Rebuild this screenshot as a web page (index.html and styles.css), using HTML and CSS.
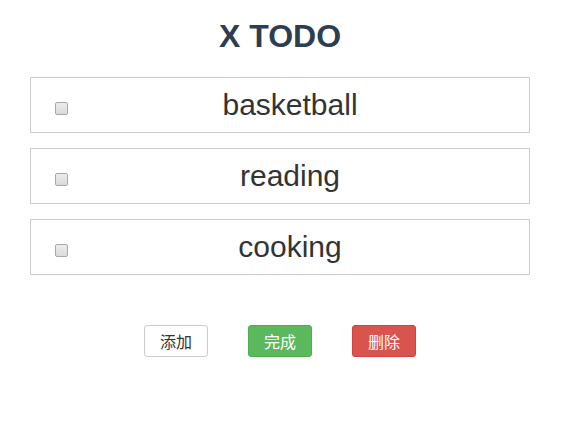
FILE: index.html
```html
<!DOCTYPE html>
<html>
<head>
<meta charset="utf-8">
<link rel="stylesheet" href="styles.css">
</head>
<body>
<div class="app">
  <h1 class="title">X TODO</h1>
  <ul class="list">
    <li class="item"><input type="checkbox" class="check"><span class="label">basketball</span></li>
    <li class="item"><input type="checkbox" class="check"><span class="label">reading</span></li>
    <li class="item"><input type="checkbox" class="check"><span class="label">cooking</span></li>
  </ul>
  <div class="actions">
    <button class="btn btn-default">添加</button>
    <button class="btn btn-success">完成</button>
    <button class="btn btn-danger">删除</button>
  </div>
</div>
</body>
</html>
```
FILE: styles.css
```css
html, body {
  margin: 0;
  padding: 0;
  background: #fff;
}
body {
  font-family: "Liberation Sans", Arial, "Noto Sans CJK SC", sans-serif;
  color: #333;
}
.app {
  width: 500px;
  margin-left: 30px;
}
.title {
  margin: 18px 0 22px;
  font-size: 32px;
  line-height: 37px;
  font-weight: bold;
  color: #2c3e50;
  text-align: center;
}
.list {
  list-style: none;
  margin: 0;
  padding: 0;
  display: flex;
  flex-direction: column;
  gap: 15px;
}
.item {
  box-sizing: border-box;
  height: 56px;
  border: 1px solid #ccc;
  display: flex;
  align-items: center;
  padding-left: 24px;
}
.check {
  appearance: none;
  -webkit-appearance: none;
  box-sizing: border-box;
  width: 13px;
  height: 13px;
  margin: 6px 0 0 0;
  border: 1px solid #a8a8a8;
  border-radius: 2px;
  background: linear-gradient(#ececec, #dadada);
}
.label {
  flex: 1;
  text-align: center;
  font-size: 30px;
  line-height: 34px;
  margin: 0 17px 0 0;
  color: #333;
}
.actions {
  display: flex;
  justify-content: center;
  gap: 40px;
  margin-top: 50px;
}
.btn {
  box-sizing: border-box;
  width: 64px;
  height: 32px;
  padding: 0;
  border: 1px solid #ccc;
  border-radius: 3px;
  font-family: "Noto Sans CJK SC", sans-serif;
  font-size: 16px;
  line-height: 30px;
  cursor: pointer;
}
.btn-default {
  background: #fff;
  color: #333;
  border-color: #ccc;
}
.btn-success {
  background: #5cb85c;
  border-color: #4cae4c;
  color: #fff;
}
.btn-danger {
  background: #d9534f;
  border-color: #d43f3a;
  color: #fff;
}
```
